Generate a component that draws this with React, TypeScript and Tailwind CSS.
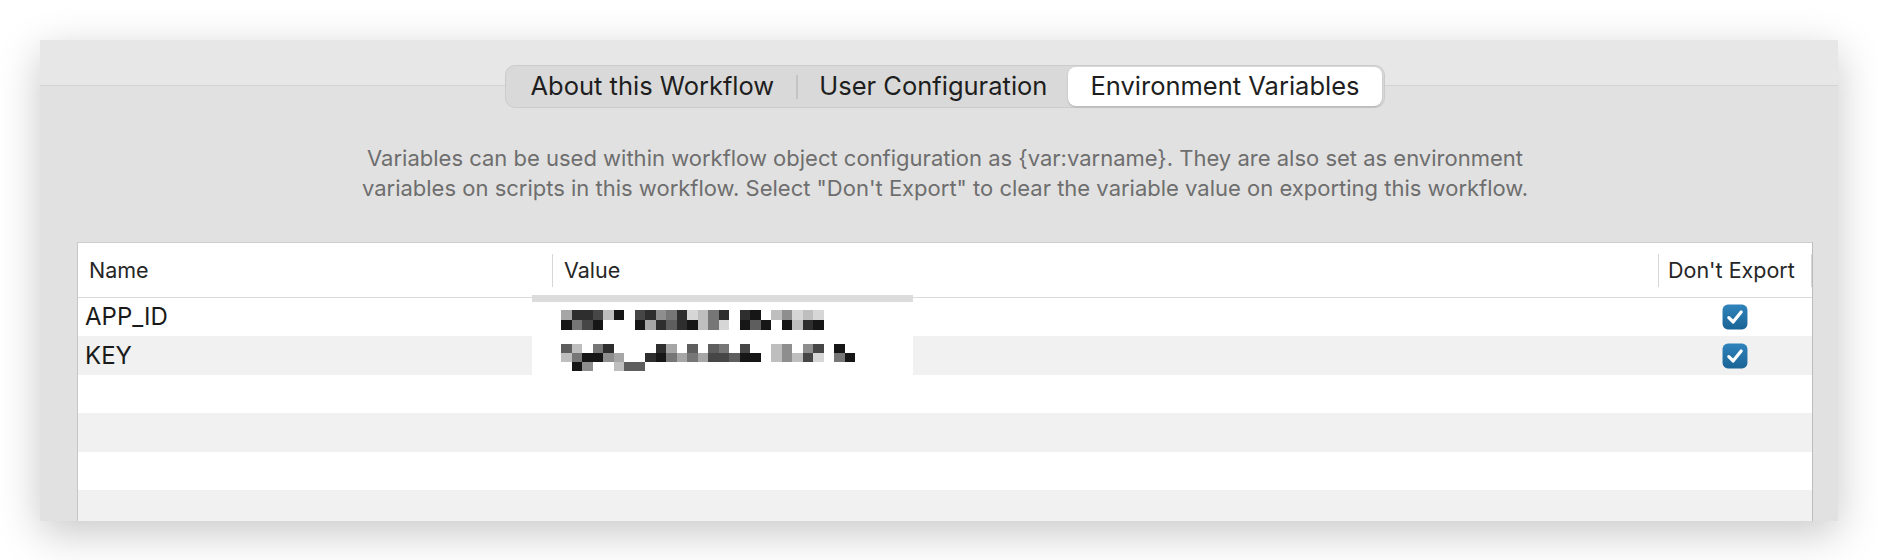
import React from "react"

const font = { fontFamily: "Inter, 'Noto Sans', 'Liberation Sans', sans-serif" }

// pixelated value blocks: 0 = empty, 1..9 = darkness
const appIdPixels = [
    "3887290784581258089024121",
    "9579000938689251096909289",
]
const keyPixels = [
    "6205800008306065070024047090",
    "2599430089535377699024271059",
    "0940026600000000000000000000",
]

function shade(ch: string) {
    if (ch === " " || ch === "0") return "transparent"
    const n = parseInt(ch, 10)
    const v = Math.round(238 - n * 24)
    return `rgb(${v},${v},${v})`
}

function Pixels({ rows, h }: { rows: string[]; h: string }) {
    return (
        <div className="flex flex-col">
            {rows.map((r, i) => (
                <div key={i} className="flex">
                    {r.split("").map((c, j) => (
                        <div key={j} className={`w-[10.5px] ${h}`} style={{ backgroundColor: shade(c) }} />
                    ))}
                </div>
            ))}
        </div>
    )
}

function Checkbox() {
    return (
        <svg width="26" height="26" viewBox="0 0 24 24">
            <defs>
                <linearGradient id="cb" x1="0" y1="0" x2="0" y2="1">
                    <stop offset="0" stopColor="#2f83bc" />
                    <stop offset="1" stopColor="#1a6496" />
                </linearGradient>
            </defs>
            <rect x="0.5" y="0.5" width="23" height="23" rx="5" fill="url(#cb)" />
            <path d="M6.3 12.6 L10.2 16.6 L17.7 7.3" fill="none" stroke="white" strokeWidth="3" strokeLinecap="round" strokeLinejoin="round" />
        </svg>
    )
}

function HeaderCell({ label, divider, pad }: { label?: string; divider?: boolean; pad: string }) {
    return (
        <div className="flex items-center h-full">
            {divider && <div className="w-px h-[33px] bg-[#d6d6d6]" />}
            {label && <span className={`${pad} text-[21.5px] text-[#262626]`}>{label}</span>}
        </div>
    )
}

const rows = [
    { name: "APP_ID", checked: true },
    { name: "KEY", checked: true },
    { name: "", checked: false },
    { name: "", checked: false },
    { name: "", checked: false },
    { name: "", checked: false },
]

export default function App() {
    return (
        <div className="w-[1878px] h-[560px] bg-white pt-[40px] pl-[40px]" style={font}>
            <div className="w-[1798px] h-[481px] bg-[#e1e1e1] shadow-[0_12px_40px_rgba(0,0,0,0.22)] overflow-hidden flex flex-col">
                {/* title strip */}
                <div className="h-[46px] shrink-0 bg-[#e7e7e7] border-b border-[#d4d4d4]" />

                {/* tabs */}
                <div className="flex justify-center -mt-[21px] pl-[12px]">
                    <div className="flex items-center h-[43px] rounded-[10px] bg-[#d9d9d9] border border-[#cbcbcb] px-[2px] text-[25.5px] text-[#1e1e1e]">
                        <div className="px-[22px]">About this Workflow</div>
                        <div className="w-[2px] h-[24px] bg-[#c4c4c4]" />
                        <div className="px-[21px]">User Configuration</div>
                        <div className="h-[39px] flex items-center px-[22px] bg-white rounded-[8px] shadow-[0_1px_2px_rgba(0,0,0,0.18)]">
                            Environment Variables
                        </div>
                    </div>
                </div>

                {/* description */}
                <p className="mt-[35px] pl-[12px] text-center text-[22px] leading-[30px] text-[#6e6e6e]">
                    Variables can be used within workflow object configuration as {"{var:varname}"}. They are also set as environment
                    <br />
                    variables on scripts in this workflow. Select "Don't Export" to clear the variable value on exporting this workflow.
                </p>

                {/* table */}
                <div className="mt-[39px] ml-[37px] mr-[25px] flex-1 relative bg-white border-l border-t border-r border-l-[#c6c6c6] border-t-[#cdcdcd] border-r-[#bcbcbc]">
                    <div className="grid grid-cols-[474px_1106px_153px_1fr] h-[55px] border-b border-[#dadada]">
                        <HeaderCell label="Name" pad="pl-[11px]" />
                        <HeaderCell label="Value" divider pad="pl-[11px]" />
                        <HeaderCell label="Don't Export" divider pad="pl-[9px]" />
                        <HeaderCell divider pad="" />
                    </div>
                    {rows.map((r, i) => (
                        <div
                            key={i}
                            className={`grid grid-cols-[474px_1106px_153px_1fr] h-[38.4px] items-center ${i % 2 === 1 ? "bg-[#f0f1f0]" : "bg-white"}`}
                        >
                            <div className="pl-[7px] text-[24px] text-[#1a1a1a]">{r.name}</div>
                            <div />
                            <div className="flex justify-center">{r.checked && <Checkbox />}</div>
                            <div />
                        </div>
                    ))}

                    {/* pixelated values */}
                    <div className="absolute left-[454px] top-[52px] w-[381px] h-[80px] bg-white border-t-[7px] border-[#dcdcdc]">
                        <div className="ml-[29px] mt-[8px]">
                            <Pixels rows={appIdPixels} h="h-[10px]" />
                        </div>
                        <div className="ml-[29px] mt-[14px]">
                            <Pixels rows={keyPixels} h="h-[9px]" />
                        </div>
                    </div>
                </div>
            </div>
        </div>
    )
}
